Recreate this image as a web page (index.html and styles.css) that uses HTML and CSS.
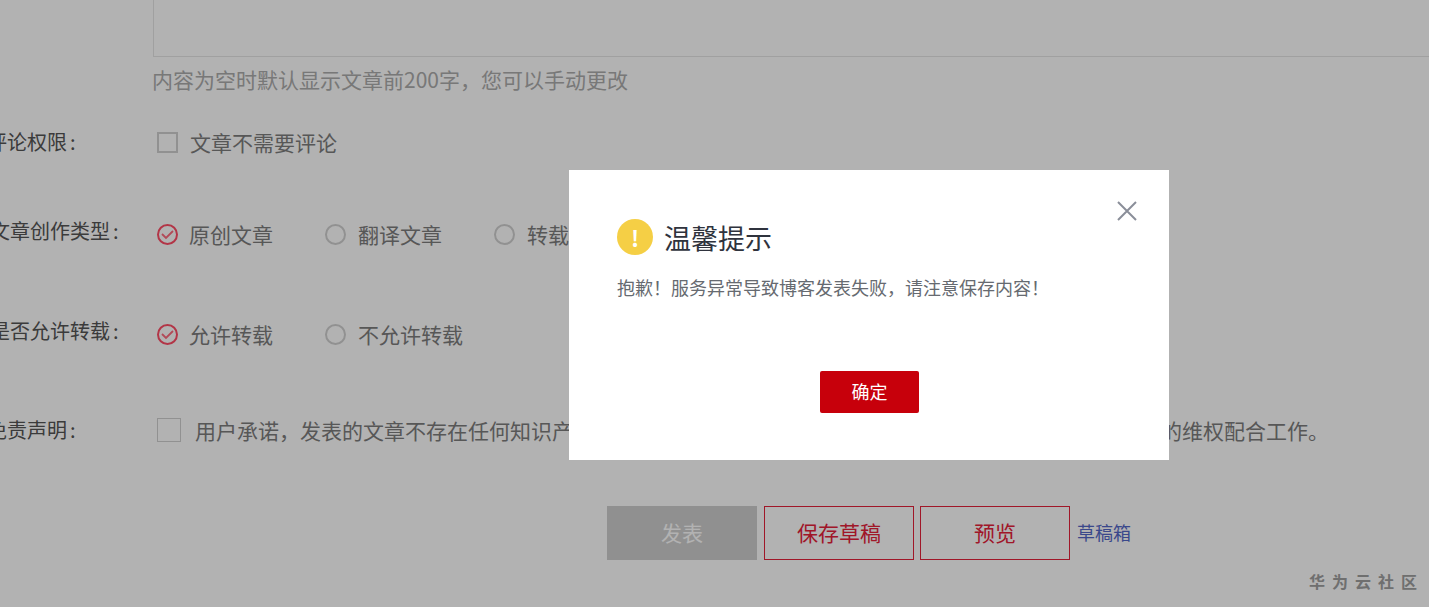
FILE: index.html
```html
<!DOCTYPE html>
<html lang="zh-CN">
<head>
    <meta charset="UTF-8">
    <meta name="viewport" content="width=device-width, initial-scale=1.0">
    <title>发表博客</title>
    <link rel="stylesheet" href="styles.css">
</head>
<body>
    <div class="form">
        <div class="summary-box"></div>
        <p class="hint">内容为空时默认显示文章前200字，您可以手动更改</p>

        <div class="row row-comment">
            <label class="row-label">评论权限<span class="colon">:</span></label>
            <div class="options">
                <span class="check"></span>
                <span class="opt-text">文章不需要评论</span>
            </div>
        </div>

        <div class="row row-type">
            <label class="row-label label-long">文章创作类型<span class="colon">:</span></label>
            <div class="options">
                <span class="radio on"><svg viewBox="0 0 17 17"><path d="M3 8l4 4 7-7"/></svg></span>
                <span class="opt-text">原创文章</span>
                <span class="radio"></span>
                <span class="opt-text">翻译文章</span>
                <span class="radio"></span>
                <span class="opt-text">转载文章</span>
            </div>
        </div>

        <div class="row row-allow">
            <label class="row-label label-long">是否允许转载<span class="colon">:</span></label>
            <div class="options">
                <span class="radio on"><svg viewBox="0 0 17 17"><path d="M3 8l4 4 7-7"/></svg></span>
                <span class="opt-text">允许转载</span>
                <span class="radio"></span>
                <span class="opt-text">不允许转载</span>
            </div>
        </div>

        <div class="row row-claim">
            <label class="row-label">免责声明<span class="colon">:</span></label>
            <div class="options">
                <span class="check check-big"></span>
                <span class="claim-text">用户承诺，发表的文章不存在任何知识产权侵权或其他违法内容，如因此引发纠纷，用户应积极配合华为的维权配合工作。</span>
            </div>
        </div>

        <div class="actions">
            <button class="btn btn-publish">发表</button>
            <button class="btn btn-save">保存草稿</button>
            <button class="btn btn-preview">预览</button>
            <a class="drafts">草稿箱</a>
        </div>
    </div>

    <div class="watermark">华为云社区</div>

    <div class="mask"></div>

    <div class="dialog">
        <button class="dialog-close">
            <svg viewBox="0 0 20 20"><path d="M1 1l18 18M19 1L1 19"/></svg>
        </button>
        <div class="dialog-head">
            <span class="warn-icon">!</span>
            <h2>温馨提示</h2>
        </div>
        <p class="dialog-msg">抱歉！服务异常导致博客发表失败，请注意保存内容！</p>
        <div class="dialog-foot">
            <button class="btn-ok">确定</button>
        </div>
    </div>
</body>
</html>
```

FILE: styles.css
```css
body {
    margin: 0;
    height: 607px;
    overflow: hidden;
    background: #fff;
    font-family: "Noto Sans CJK SC", "Liberation Sans", sans-serif;
    position: relative;
}

/* 表单，页面已向下滚动 */
.form {
    margin: -64px 0 0 -23px;
    width: 1460px;
}

.summary-box {
    margin-left: 176px;
    height: 121px;
    border: 1px solid #e6e6e6;
    border-right: 0;
    box-sizing: border-box;
}

.hint {
    margin: 10px 0 0 175px;
    font-size: 21px;
    line-height: 24px;
    color: #acacac;
}

.row {
    display: flex;
    align-items: center;
    height: 40px;
}

.row-comment { margin-top: 31px; }
.row-type { margin-top: 52px; }
.row-allow { margin-top: 60px; }
.row-claim { margin-top: 56px; }

.row-label {
    width: 176px;
    flex-shrink: 0;
    box-sizing: border-box;
    padding-left: 10px;
    font-size: 20px;
    line-height: 28px;
    color: #555;
    white-space: nowrap;
}

.label-long {
    padding-left: 13px;
    padding-bottom: 6px;
}

.colon {
    margin-left: 3px;
}

.options {
    display: flex;
    align-items: center;
    padding-left: 4px;
    font-size: 21px;
    color: #7d7d7d;
    white-space: nowrap;
}

.opt-text {
    margin-right: 52px;
}

.check {
    width: 21px;
    height: 21px;
    box-sizing: border-box;
    border: 2px solid #d0d0d0;
    margin-right: 12px;
}

.check-big {
    width: 24px;
    height: 24px;
    border-width: 1px;
    margin-right: 14px;
}

.claim-text {
    color: #7d7d7d;
}

.radio {
    width: 21px;
    height: 21px;
    box-sizing: border-box;
    border: 2px solid #d0d0d0;
    border-radius: 50%;
    margin-right: 12px;
}

.radio.on {
    border-color: #ff4d66;
    margin-right: 11px;
}

.radio svg {
    display: block;
    width: 100%;
    height: 100%;
}

.radio path {
    fill: none;
    stroke: #ff6a7e;
    stroke-width: 1.8;
}

/* 底部按钮 */
.actions {
    display: flex;
    align-items: center;
    margin: 56px 0 0 630px;
}

.btn {
    width: 150px;
    height: 54px;
    box-sizing: border-box;
    padding: 0 0 3px;
    font-family: inherit;
    font-size: 21px;
    background: #fff;
    border: 1px solid #e6223a;
    color: #e6223a;
}

.btn-publish {
    background: #cfcfcf;
    border-color: #cfcfcf;
    color: #fff;
}

.btn-save { margin-left: 7px; }
.btn-preview { margin-left: 6px; }

.drafts {
    margin: 0 0 3px 7px;
    font-size: 18px;
    color: #5468c8;
}

.watermark {
    position: absolute;
    right: 5px;
    top: 570px;
    font-size: 16px;
    font-weight: 700;
    line-height: 22px;
    letter-spacing: 7px;
    color: #a0a0a0;
}

/* 遮罩和弹窗 */
.mask {
    position: fixed;
    inset: 0;
    background: rgba(0, 0, 0, 0.3);
}

.dialog {
    position: fixed;
    left: 569px;
    top: 170px;
    width: 600px;
    height: 290px;
    box-sizing: border-box;
    padding: 49px 48px 0;
    background: #fff;
}

.dialog-close {
    position: absolute;
    right: 32px;
    top: 31px;
    width: 20px;
    height: 20px;
    padding: 0;
    border: 0;
    background: none;
}

.dialog-close svg {
    display: block;
    width: 20px;
    height: 20px;
}

.dialog-close path {
    fill: none;
    stroke: #8a8e99;
    stroke-width: 2;
}

.dialog-head {
    display: flex;
    align-items: center;
    height: 36px;
}

.warn-icon {
    width: 36px;
    height: 36px;
    border-radius: 50%;
    background: #f5cf45;
    color: #fff;
    font-size: 22px;
    font-weight: 700;
    line-height: 36px;
    text-align: center;
    margin-right: 11px;
}

.dialog-head h2 {
    margin: 2px 0 0;
    font-size: 27px;
    font-weight: normal;
    line-height: 36px;
    color: #2f333d;
}

.dialog-msg {
    margin: 19px 0 0;
    font-size: 18px;
    line-height: 26px;
    color: #666a70;
}

.dialog-foot {
    display: flex;
    justify-content: center;
    margin-top: 71px;
    padding-left: 1px;
}

.btn-ok {
    width: 99px;
    height: 42px;
    padding: 0 0 2px;
    border: 0;
    border-radius: 2px;
    background: #c7000b;
    color: #fff;
    font-family: inherit;
    font-size: 18px;
}
```
